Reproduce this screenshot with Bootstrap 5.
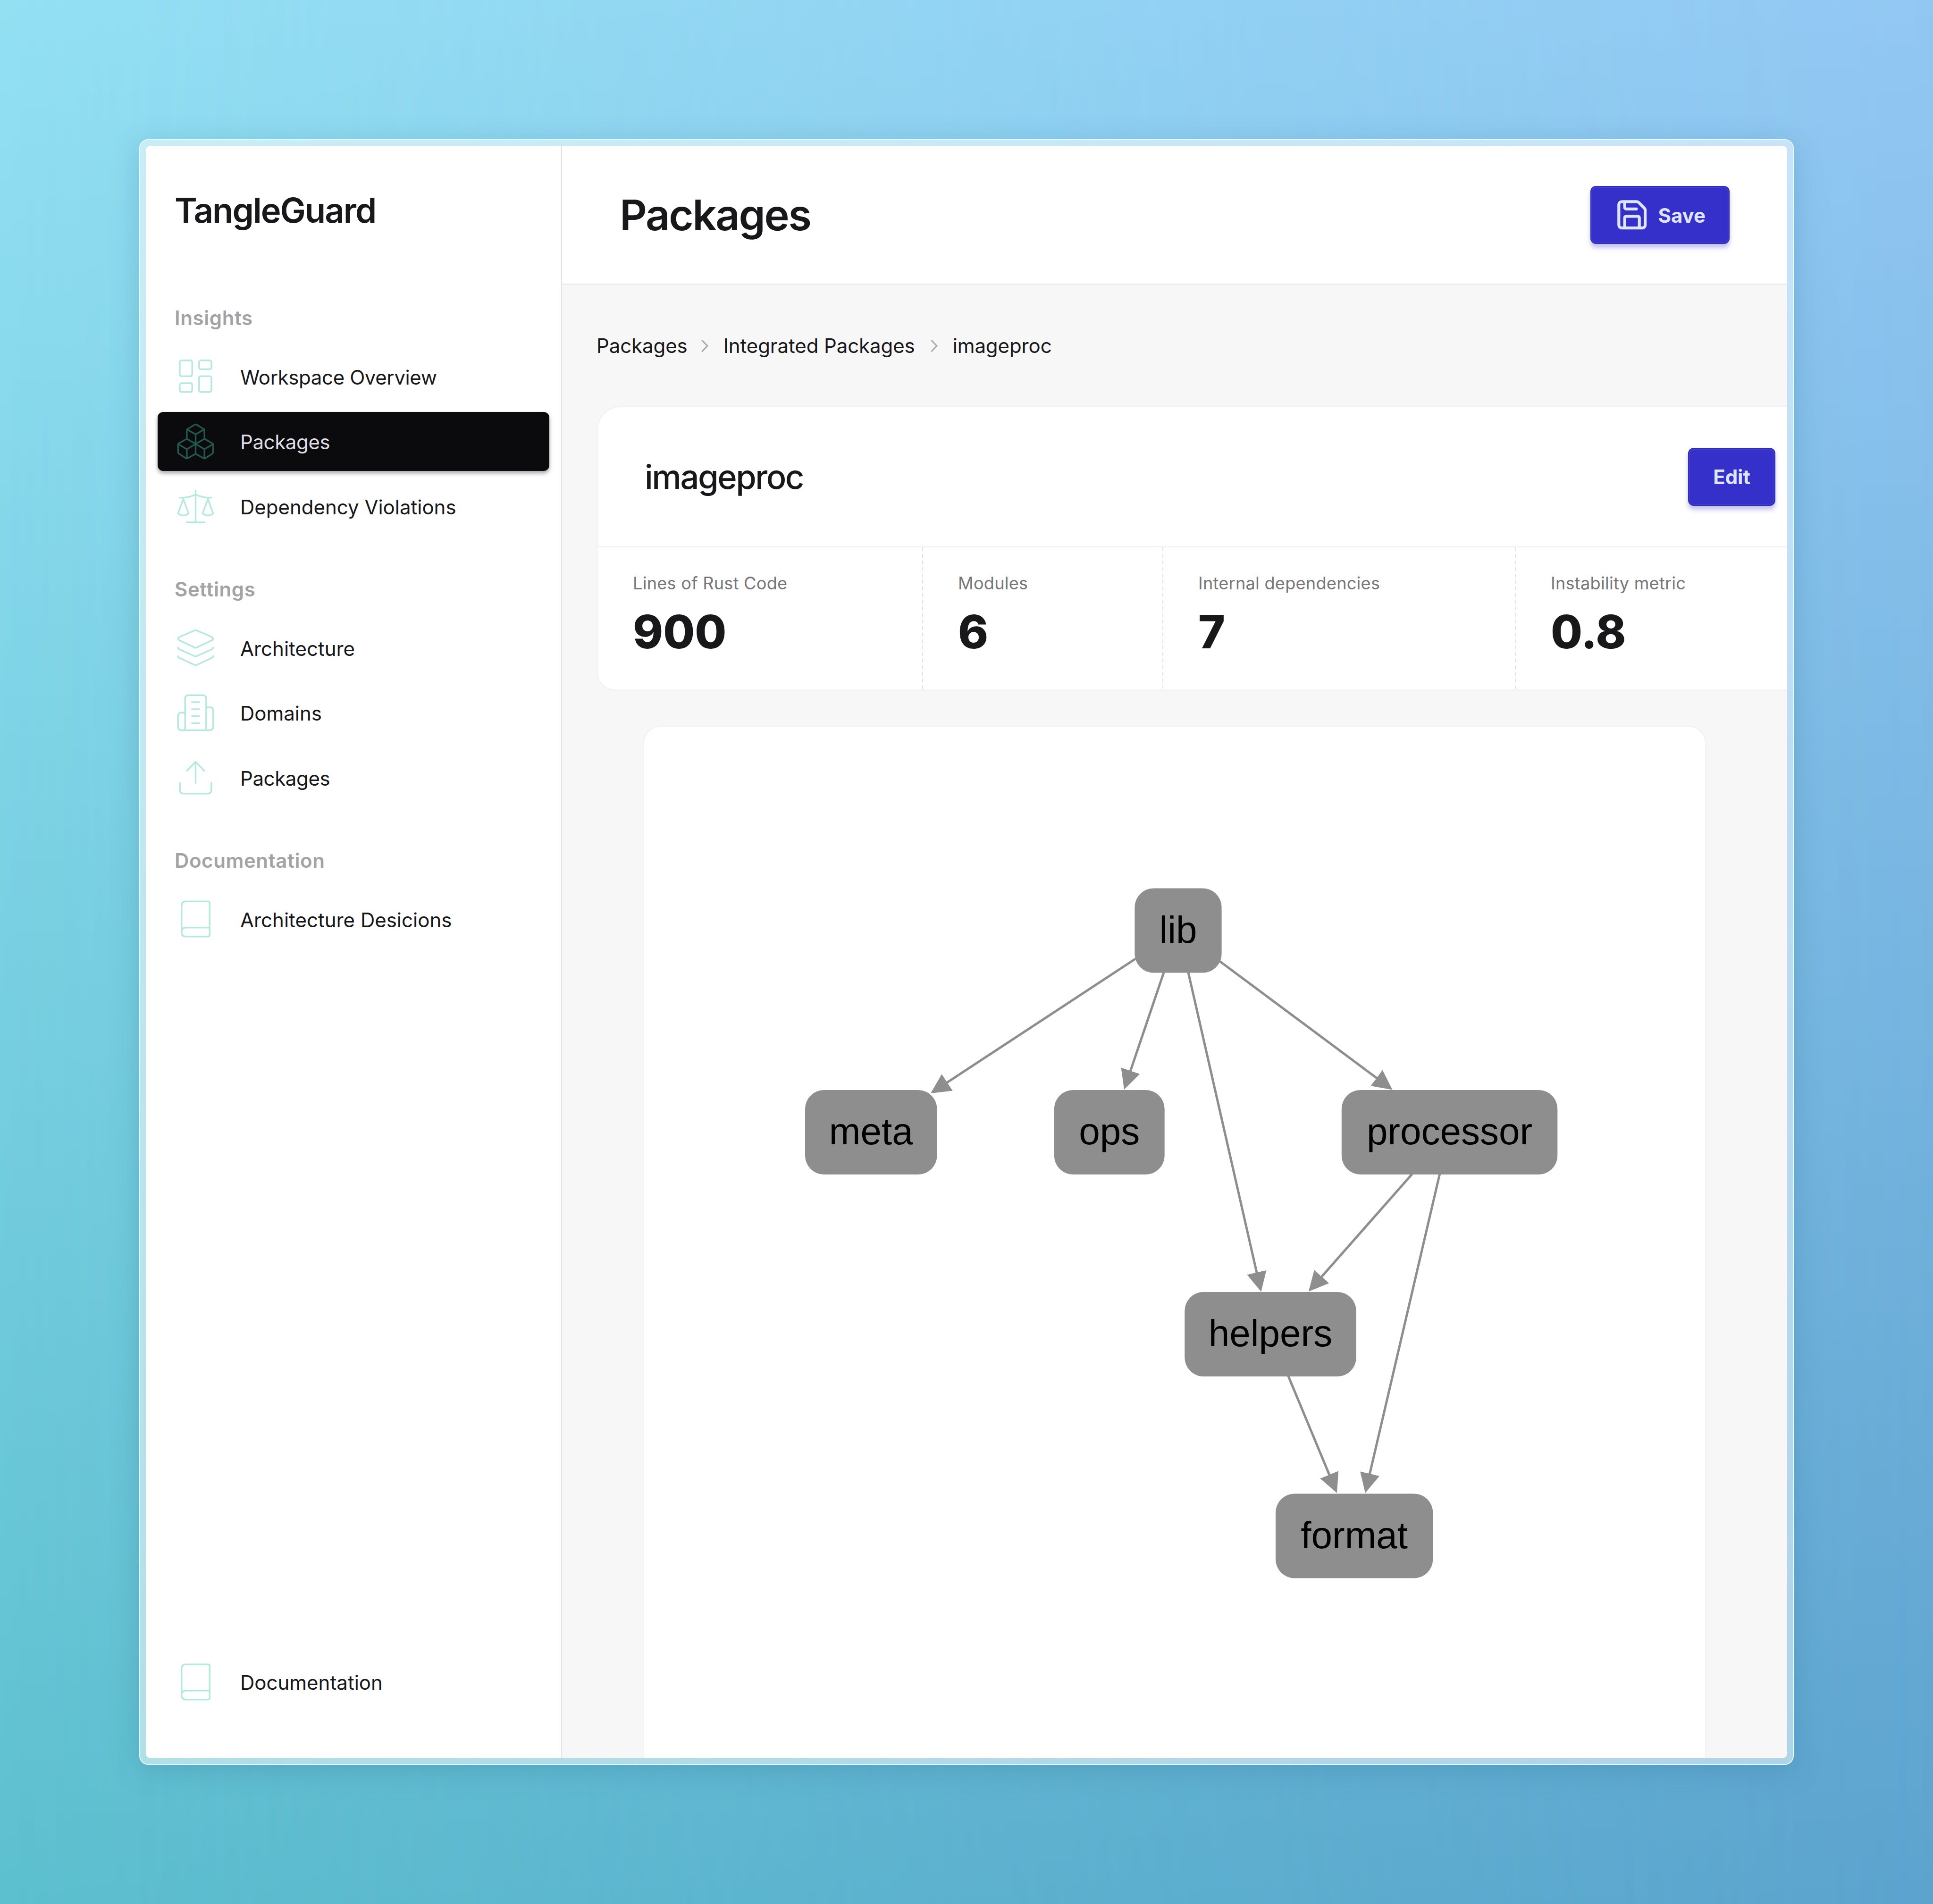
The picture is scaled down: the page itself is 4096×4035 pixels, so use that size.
<!DOCTYPE html>
<html lang="en">
<head>
<meta charset="utf-8">
<meta name="viewport" content="width=device-width, initial-scale=1">
<title>TangleGuard</title>
<link href="https://cdn.jsdelivr.net/npm/bootstrap@5.3.0/dist/css/bootstrap.min.css" rel="stylesheet">
<style>
body{width:4096px;height:4035px;overflow:hidden;position:relative;font-family:Inter,"Liberation Sans",sans-serif;color:#18181b;font-size:42px;line-height:60px;background:linear-gradient(to bottom,#93e0f3,#5dc0cf)}
.backdrop{inset:0;background:linear-gradient(to bottom,#92c7f3,#5ca3ce);-webkit-mask-image:linear-gradient(to right,transparent,#000);mask-image:linear-gradient(to right,transparent,#000)}
.stage{padding:295px;height:4035px}
.frame{width:3506px;height:3445px;padding:12px;border:2px solid #eafbff;border-radius:19px;background:rgba(255,255,255,.5);background-clip:padding-box;box-shadow:0 12px 60px rgba(50,110,150,.28)}
.app-window{border-radius:10px;background:#fff;overflow:hidden}
.side{width:882px;border-right:2px solid #e4e4e7;padding:0 25px 99px}
.brand{font-size:72.5px;font-weight:600;line-height:90px;letter-spacing:-.028em;padding:92px 0 0 36px;height:335px}
.group-label{color:#a3a3a6;font-weight:600;letter-spacing:.6px;padding-left:36px;margin-bottom:31px;line-height:60px}
.side-group{margin-bottom:83px}
.side-link{height:125.6px;padding:0 0 0 39px;gap:53px;border-radius:12px;color:#18181b;text-decoration:none}
.side-link span{padding-top:4px}
.side-links{gap:12.1px}
.side-link.active{background:#0b0b0d;color:#dedde3;box-shadow:0 5px 8px rgba(0,0,0,.35)}
.side-link svg{width:83px;height:83px;fill:none;stroke:#b5e9df;stroke-width:1;stroke-linecap:round;stroke-linejoin:round}
.side-link.active svg{stroke:#22574f}
.snug{letter-spacing:-.4px}
.main-col{background:#f7f7f7;min-width:0}
.top-bar{height:294px;padding:0 122px 0 122px;background:#fff;border-bottom:2px solid #e7e7e8}
.page-title{font-size:90px;font-weight:600;letter-spacing:-.026em;line-height:110px;padding-top:2px}
.btn-indigo{height:123px;border-radius:12px;background:#3530c9;border:2px solid #302cb4;color:#dfe4ff;font-size:42px;font-weight:700;line-height:60px;box-shadow:inset 0 3px 0 #423ecf,inset 0 0 0 2px #3f3bcc,0 8px 10px rgba(53,48,201,.3)}
.btn-save{width:295px;gap:18px;padding:0}
.btn-save span{padding-top:3px}
.btn-save svg{width:74.4px;height:74.4px;fill:none;stroke:#dfe4ff;stroke-width:2;stroke-linecap:round;stroke-linejoin:round}
.btn-edit{width:185px;padding:2px 0 0}
.content{padding:98px 0 0 76px}
.crumbs{height:64px;margin:0 0 98px -3px;letter-spacing:-.1px}
.crumbs svg{width:15px;height:26px;fill:none;stroke:#a8a8aa;stroke-width:3;margin:0 32px 0 29px}
.crumbs span + svg ~ span + svg{margin-left:33px}
.pkg-card{width:2594px;background:#fff;border-radius:48px 48px 36px 36px;box-shadow:0 0 0 3px #f3f3f3}
.pkg-head{height:297px;padding:0 99px;border-bottom:3px solid #f3f3f3}
.pkg-title{font-size:70.5px;letter-spacing:-.035em;line-height:90px;padding-top:2px}
.stats{height:301px}
.stat{padding:49px 0 0 76px}
.stat + .stat{background:repeating-linear-gradient(to bottom,#e3e3e5 0 8px,transparent 8px 13.9px) left top/2px 100% no-repeat}
.stat-1{width:687px;padding-left:74px}.stat-2{width:509px}.stat-3{width:747px}
.stat-label{font-size:36.2px;line-height:54px;letter-spacing:.006em;color:#77777a}
.stat-value{font-size:97px;line-height:120px;font-weight:800;margin-top:16px}
.graph-card{margin:79px 0 0 98px;width:2248px;height:2260px;background:#fff;border-radius:36px;box-shadow:0 0 0 3px #f3f3f3}
.graph-card text{font:80px "Liberation Sans",Arial,sans-serif;text-anchor:middle;fill:#000}
</style>
</head>
<body>
<div class="backdrop position-absolute"></div>
<div class="stage position-relative">
<div class="frame d-flex">
<div class="app-window d-flex flex-grow-1">
  <aside class="side d-flex flex-column flex-shrink-0">
    <div class="brand">TangleGuard</div>
    <div class="side-group">
      <div class="group-label">Insights</div>
      <nav class="side-links d-flex flex-column">
        <a class="side-link d-flex align-items-center" href="#"><svg viewBox="0 0 24 24"><rect x="2.3" y="2.25" width="7.6" height="9.7" rx="1.1"/><rect x="14.1" y="2.25" width="7.6" height="5.4" rx="1.1"/><rect x="2.3" y="16.2" width="7.6" height="5.4" rx="1.1"/><rect x="14.1" y="11.9" width="7.6" height="9.7" rx="1.1"/></svg><span class="snug">Workspace Overview</span></a>
        <a class="side-link active d-flex align-items-center" href="#"><svg viewBox="0 0 24 24"><path d="M12 7.65 6.7 4.6M12 7.65l5.3-3.05M12 7.65v5.9M6.6 10.4V5.5q0-.8.6-1.2L11.3 1.8q.7-.4 1.4 0l4.1 2.5q.6.4.6 1.2v4.9M6.6 10.4 12 13.55l5.4-3.15M6.6 10.4 1.9 13q-.65.4-.65 1.1v4.4q0 .7.6 1.1L5.9 22.2q.7.4 1.4 0L12 19.6M1.5 13.7l5.1 3.1 5.4-3.25v6.05M6.6 16.8v5.6M17.4 10.4 22.1 13q.65.4.65 1.1v4.4q0 .7-.6 1.1L18.1 22.2q-.7.4-1.4 0L12 19.6M22.5 13.7l-5.1 3.1-5.4-3.25M17.4 16.8v5.6"/></svg><span class="snug">Packages</span></a>
        <a class="side-link d-flex align-items-center" href="#"><svg viewBox="0 0 24 24"><path d="M12 2.1V21.7M6.55 21.7h10.9M2.4 6.6H4.7Q8.6 6.4 12 4.5q3.4 1.9 7.3 2.1h2.3M4.46 7.4 1.25 16.2q3.2 2.5 6.45 0zM19.54 7.4 16.3 16.2q3.2 2.5 6.45 0z"/></svg><span>Dependency Violations</span></a>
      </nav>
    </div>
    <div class="side-group">
      <div class="group-label">Settings</div>
      <nav class="side-links d-flex flex-column">
        <a class="side-link d-flex align-items-center" href="#"><svg viewBox="0 0 24 24"><path d="M11.3 1.5q.7-.3 1.4 0l9.3 4q1.5 1 0 2l-9.3 4.4q-.7.3-1.4 0L2 7.5q-1.5-1 0-2zM1.25 12q.1.7.8 1l9.3 4.2q.65.3 1.3 0l9.3-4.2q.7-.3.8-1M1.25 17.3q.1.7.8 1l9.3 4.3q.65.3 1.3 0l9.3-4.3q.7-.3.8-1"/></svg><span>Architecture</span></a>
        <a class="side-link d-flex align-items-center" href="#"><svg viewBox="0 0 24 24"><path d="M5.55 22.7V3.4q0-2.15 2.15-2.15h8.6q2.15 0 2.15 2.15V22.7M5.55 11.9H3.4q-2.15 0-2.15 2.15v6.5q0 2.15 2.15 2.15h17.2q2.15 0 2.15-2.15V10.8q0-2.15-2.15-2.15h-2.15M9.75 5.5h4.5M9.75 9.8h4.5M9.75 14.1h4.5M9.75 18.4h4.5"/></svg><span>Domains</span></a>
        <a class="side-link d-flex align-items-center" href="#"><svg viewBox="0 0 24 24"><path d="M12 15.2V2.1M6.7 7.65 12 2.1l5.3 5.55M2.35 15v4.4q0 2.2 2.2 2.2h14.9q2.2 0 2.2-2.2V15"/></svg><span class="snug">Packages</span></a>
      </nav>
    </div>
    <div>
      <div class="group-label">Documentation</div>
      <nav class="side-links d-flex flex-column">
        <a class="side-link d-flex align-items-center" href="#"><svg viewBox="0 0 24 24"><path d="M3.4 20V4q0-2.75 2.75-2.75h13.4q1.05 0 1.05 1.05V21.7q0 1.05-1.05 1.05H6.15Q3.4 22.75 3.4 20q0-2.7 2.75-2.7H20.6"/></svg><span>Architecture Desicions</span></a>
      </nav>
    </div>
    <nav class="mt-auto">
      <a class="side-link d-flex align-items-center" href="#"><svg viewBox="0 0 24 24"><path d="M3.4 20V4q0-2.75 2.75-2.75h13.4q1.05 0 1.05 1.05V21.7q0 1.05-1.05 1.05H6.15Q3.4 22.75 3.4 20q0-2.7 2.75-2.7H20.6"/></svg><span>Documentation</span></a>
    </nav>
  </aside>
  <main class="main-col flex-grow-1 overflow-hidden">
    <header class="top-bar d-flex align-items-center justify-content-between">
      <h1 class="page-title mb-0">Packages</h1>
      <button class="btn btn-indigo btn-save d-flex align-items-center justify-content-center" type="button"><svg viewBox="0 0 24 24"><path d="M15.2 3a2 2 0 0 1 1.4.6l3.8 3.8a2 2 0 0 1 .6 1.4V19a2 2 0 0 1-2 2H5a2 2 0 0 1-2-2V5a2 2 0 0 1 2-2zM17 21v-7a1 1 0 0 0-1-1H8a1 1 0 0 0-1 1v7M7 3v4a1 1 0 0 0 1 1h7"/></svg><span>Save</span></button>
    </header>
    <div class="content">
      <nav class="crumbs d-flex align-items-center"><span>Packages</span><svg viewBox="0 0 15 26"><path d="M1.5 1 13 13 1.5 25"/></svg><span>Integrated Packages</span><svg viewBox="0 0 15 26"><path d="M1.5 1 13 13 1.5 25"/></svg><span>imageproc</span></nav>
      <section class="pkg-card">
        <div class="pkg-head d-flex align-items-center justify-content-between"><h2 class="pkg-title mb-0">imageproc</h2><button class="btn btn-indigo btn-edit" type="button">Edit</button></div>
        <div class="stats d-flex">
          <div class="stat stat-1"><div class="stat-label">Lines of Rust Code</div><div class="stat-value">900</div></div>
          <div class="stat stat-2"><div class="stat-label">Modules</div><div class="stat-value">6</div></div>
          <div class="stat stat-3"><div class="stat-label">Internal dependencies</div><div class="stat-value">7</div></div>
          <div class="stat flex-grow-1"><div class="stat-label">Instability metric</div><div class="stat-value">0.8</div></div>
        </div>
      </section>
      <section class="graph-card">
        <svg class="d-block" width="2248" height="2260" viewBox="1365 1540 2248 2260">
          <defs><marker id="tip" markerUnits="userSpaceOnUse" markerWidth="44" markerHeight="44" refX="12" refY="21" orient="auto"><path d="M0 0 42 21 0 42z" fill="#8e8e8e"/></marker></defs>
          <g stroke="#8e8e8e" stroke-width="5">
            <path d="M2406 2032 1997.1 2300.5" marker-end="url(#tip)"/>
            <path d="M2466 2061 2391.6 2280.6" marker-end="url(#tip)"/>
            <path d="M2518 2061 2665.6 2708.3" marker-end="url(#tip)"/>
            <path d="M2584.8 2037.3 2926.5 2291.6" marker-end="url(#tip)"/>
            <path d="M2992.3 2488 2792.7 2714.5" marker-end="url(#tip)"/>
            <path d="M3050.7 2488 2899.8 3134.8" marker-end="url(#tip)"/>
            <path d="M2729.8 2916 2821.4 3136.3" marker-end="url(#tip)"/>
          </g>
          <g fill="#8e8e8e">
            <rect x="2404.4" y="1882.5" width="184.2" height="179" rx="40"/>
            <rect x="1706" y="2310" width="279.5" height="179" rx="40"/>
            <rect x="2233.8" y="2310" width="233.9" height="179" rx="40"/>
            <rect x="2842.8" y="2310" width="457.5" height="179" rx="40"/>
            <rect x="2510.3" y="2738" width="363.5" height="179" rx="40"/>
            <rect x="2703" y="3165.5" width="333.3" height="179" rx="40"/>
          </g>
          <text x="2496.5" y="1997.5">lib</text>
          <text x="1845.8" y="2425">meta</text>
          <text x="2350.8" y="2425">ops</text>
          <text x="3071.5" y="2425">processor</text>
          <text x="2692" y="2853">helpers</text>
          <text x="2869.7" y="3281">format</text>
        </svg>
      </section>
    </div>
  </main>
</div>
</div>
</div>
<script src="https://cdn.jsdelivr.net/npm/bootstrap@5.3.0/dist/js/bootstrap.bundle.min.js"></script>
</body>
</html>
